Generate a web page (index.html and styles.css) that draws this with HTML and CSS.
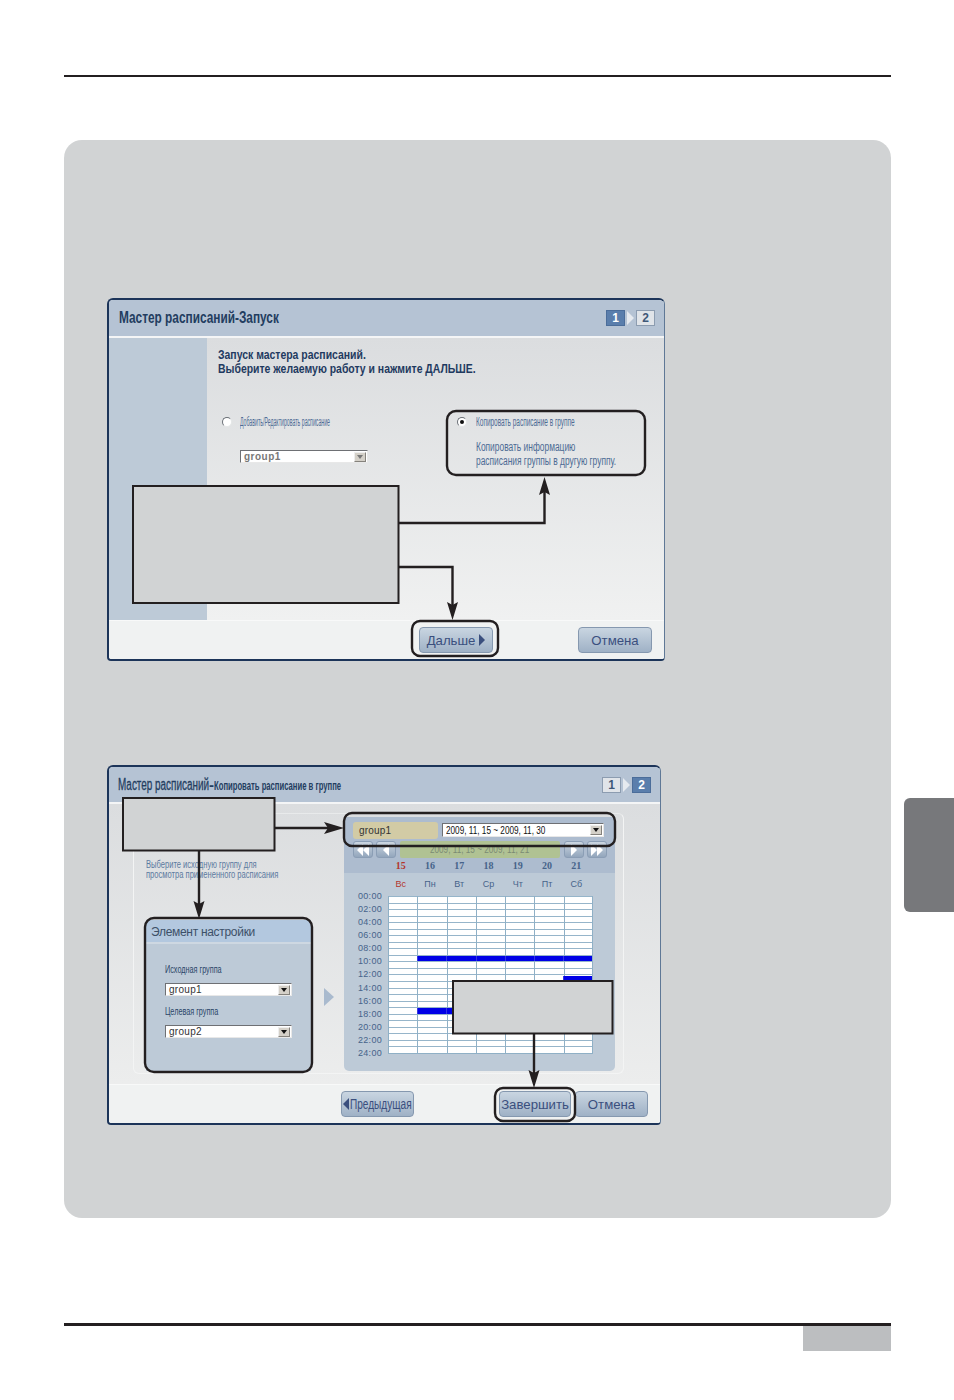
FILE: index.html
```html
<!DOCTYPE html>
<html lang="ru">
<head>
<meta charset="utf-8">
<title>Мастер расписаний</title>
<link rel="stylesheet" href="styles.css">
</head>
<body>
<div class="page">
  <div class="top-rule"></div>
  <main class="panel">
    <section class="win win-a">
      <header class="win-head">
        <h2 class="title">Мастер расписаний-Запуск</h2>
        <div class="steps">
          <span class="step on">1</span>
          <svg class="step-arrow" width="7" height="14" viewBox="0 0 7 14"><polygon points="0,0 7,7 0,14" fill="#e6eaef"/></svg>
          <span class="step">2</span>
        </div>
      </header>
      <div class="win-a-body">
        <aside class="side"></aside>
        <div class="start">
          <p class="intro">Запуск мастера расписаний.<br>Выберите желаемую работу и нажмите ДАЛЬШЕ.</p>
          <div class="choices">
            <div class="choice-l">
              <div class="radio-row"><span class="radio"></span><span class="tiny label-add">Добавить/Редактировать расписание</span></div>
              <div class="sel sel-grey"><span class="sel-text">group1</span><span class="sel-btn"></span></div>
            </div>
            <div class="choice-r">
              <div class="radio-row"><span class="radio checked"></span><span class="tiny label-copy">Копировать расписание в группе</span></div>
              <p class="tiny desc">Копировать информацию<br>расписания группы в другую группу.</p>
            </div>
          </div>
        </div>
      </div>
      <footer class="win-foot foot-a">
        <button class="btn btn-next">Дальше <svg width="6" height="12" viewBox="0 0 6 12"><polygon points="0,0 6,6 0,12" fill="#3a4f7e"/></svg></button>
        <button class="btn btn-cancel-a">Отмена</button>
      </footer>
    </section>

    <section class="win win-b">
      <header class="win-head head-b">
        <h2 class="title title-b"><span class="t-main">Мастер расписаний</span><span class="t-dash">-</span><span class="t-sub">Копировать расписание в группе</span></h2>
        <div class="steps">
          <span class="step">1</span>
          <svg class="step-arrow" width="7" height="14" viewBox="0 0 7 14"><polygon points="0,0 7,7 0,14" fill="#e6eaef"/></svg>
          <span class="step on">2</span>
        </div>
      </header>
      <div class="win-b-body">
        <div class="frame">
          <div class="left-col">
            <p class="tiny hint">Выберите исходную группу для<br>просмотра примененного расписания</p>
            <div class="setting">
              <h3 class="setting-head">Элемент настройки</h3>
              <div class="setting-body">
                <div class="tiny field-label">Исходная группа</div>
                <div class="sel sel-small"><span class="sel-text">group1</span><span class="sel-btn"></span></div>
                <div class="tiny field-label second">Целевая группа</div>
                <div class="sel sel-small"><span class="sel-text">group2</span><span class="sel-btn"></span></div>
              </div>
            </div>
          </div>
          <svg class="mid-arrow" width="10" height="18" viewBox="0 0 10 18"><polygon points="0,0 10,9 0,18" fill="#a9bace"/></svg>
          <div class="cal">
            <div class="cal-row">
              <span class="group-name">group1</span>
              <div class="sel sel-range"><span class="sel-text">2009, 11, 15 ~ 2009, 11, 30</span><span class="sel-btn"></span></div>
            </div>
            <div class="cal-nav">
              <span class="nav"><svg width="14" height="12" viewBox="0 0 14 12"><path d="M7 0 1 6l6 6zM13 0 7 6l6 6z" fill="#fff"/></svg></span>
              <span class="nav"><svg width="8" height="12" viewBox="0 0 8 12"><path d="M7 0 1 6l6 6z" fill="#fff"/></svg></span>
              <span class="week"><span class="week-text">2009, 11, 15 ~ 2009, 11, 21</span></span>
              <span class="nav"><svg width="8" height="12" viewBox="0 0 8 12"><path d="M1 0l6 6-6 6z" fill="#fff"/></svg></span>
              <span class="nav"><svg width="14" height="12" viewBox="0 0 14 12"><path d="M1 0l6 6-6 6zM7 0l6 6-6 6z" fill="#fff"/></svg></span>
            </div>
            <div class="days nums">
              <span class="sun">15</span><span>16</span><span>17</span><span>18</span><span>19</span><span>20</span><span>21</span>
            </div>
            <div class="days names">
              <span class="sun">Вс</span><span>Пн</span><span>Вт</span><span>Ср</span><span>Чт</span><span>Пт</span><span>Сб</span>
            </div>
            <div class="sched-wrap">
              <div class="times">
                <span>00:00</span><span>02:00</span><span>04:00</span><span>06:00</span><span>08:00</span><span>10:00</span><span>12:00</span><span>14:00</span><span>16:00</span><span>18:00</span><span>20:00</span><span>22:00</span><span>24:00</span>
              </div>
              <div class="sched">
                <i class="bar bar-am"></i>
                <i class="bar bar-sat"></i>
                <i class="bar bar-pm"></i>
              </div>
            </div>
          </div>
        </div>
      </div>
      <footer class="win-foot foot-b">
        <button class="btn btn-prev"><svg width="6" height="12" viewBox="0 0 6 12"><polygon points="6,0 0,6 6,12" fill="#3a4f7e"/></svg><span class="prev-text">Предыдущая</span></button>
        <button class="btn btn-finish">Завершить</button>
        <button class="btn btn-cancel-b">Отмена</button>
      </footer>
    </section>
  </main>
  <div class="bottom">
    <div class="bottom-rule"></div>
    <div class="page-tag"></div>
  </div>

  <div class="side-tab"></div>

  <svg class="overlay" width="954" height="1400" viewBox="0 0 954 1400">
    <g fill="none" stroke="#231f20" stroke-width="2.400">
      <rect x="447" y="411" width="198" height="64" rx="9"/>
      <rect x="412" y="621" width="86" height="35" rx="8"/>
      <rect x="344" y="813" width="271" height="33" rx="8"/>
      <rect x="145" y="918" width="167" height="154" rx="9"/>
      <rect x="495" y="1088" width="80" height="33" rx="8"/>
      <polyline points="399,523 544.500,523 544.500,490"/>
      <polyline points="399,567 452.500,567 452.500,606"/>
      <polyline points="275,828 330,828"/>
      <polyline points="199,851 199,906"/>
      <polyline points="534,1034 534,1074"/>
      <rect x="133" y="486" width="265.500" height="117" fill="#d1d3d4" stroke-width="2"/>
      <rect x="123" y="798" width="151.500" height="52.500" fill="#d1d3d4" stroke-width="2"/>
      <rect x="453" y="981" width="159.500" height="52.500" fill="#d1d3d4" stroke-width="2"/>
    </g>
    <g fill="#231f20">
      <polygon points="544.500,477 539,495 544.500,492 550,495"/>
      <polygon points="452.500,620 447,602 452.500,605 458,602"/>
      <polygon points="344,828 324,822 328,828 324,834"/>
      <polygon points="199,919 193.500,901 199,904 204.500,901"/>
      <polygon points="534,1088 528.500,1070 534,1073 539.500,1070"/>
    </g>
  </svg>
</div>
</body>
</html>
```
FILE: styles.css
```css
* { box-sizing: border-box; }
html, body { margin: 0; padding: 0; background: #fff; }
body { font-family: "Liberation Sans", Arial, sans-serif; color: #1f3a60; }
h2, h3, p { margin: 0; font-weight: normal; }
.page { position: relative; width: 954px; height: 1400px; overflow: hidden; padding: 75px 63px 0 64px; }
.top-rule { height: 2px; background: #231f20; }
.panel { margin-top: 63px; height: 1078px; background: #d1d3d4; border-radius: 18px; padding: 158px 0 0 43px; }

/* window shell */
.win { display: flex; flex-direction: column; border: 2px solid #1c3459; border-right-color: #5f7896; border-right-width: 1px; border-radius: 6px 6px 4px 4px; overflow: hidden; background: #e4e6e7; }
.win-a { width: 558px; height: 363px; }
.win-b { width: 554px; height: 360px; margin-top: 104px; }
.win-head { flex: none; height: 38px; display: flex; align-items: center; justify-content: space-between; padding: 0 9px 0 10px; background: #b5c3d4; border-bottom: 2px solid #f4f5f6; }
.head-b { height: 37px; padding-left: 9px; padding-right: 9px; }
.title { font-size: 16px; font-weight: bold; color: #233d60; white-space: nowrap; transform: scaleX(.74); transform-origin: left center; }
.title-b { font-size: 15px; font-weight: normal; transform: none; display: flex; align-items: baseline; }
.t-main { display: inline-block; width: 91px; font-size: 16px; transform: scaleX(.62); transform-origin: left center; -webkit-text-stroke: .3px #233d60; }
.t-dash { width: 5px; font-weight: bold; }
.t-sub { display: inline-block; width: 127px; font-size: 12px; font-weight: bold; transform: scaleX(.64); transform-origin: left center; }
.steps { display: flex; align-items: center; gap: 2px; }
.step { width: 19px; height: 16px; display: flex; align-items: center; justify-content: center; font-size: 12px; font-weight: bold; color: #3f5878; background: #e0e4e9; border: 1px solid #8c9cb0; }
.step.on { background: #5a7eac; border-color: #4b6d9a; color: #fff; }
.step-arrow { display: block; }

.tiny { font-size: 12px; white-space: nowrap; transform-origin: left center; color: #4d6b94; }

/* first window */
.win-a-body { flex: 1; display: flex; background: linear-gradient(#dbdddf, #f0f1f1); }
.side { flex: none; width: 98px; background: #bdcad7; }
.start { flex: 1; padding: 10px 0 0 11px; }
.intro { font-size: 12px; font-weight: bold; line-height: 14px; color: #1f3a60; white-space: nowrap; transform: scaleX(.87); transform-origin: left center; }
.choices { display: flex; margin-top: 39px; }
.choice-l { width: 239px; padding-left: 4px; }
.radio-row { display: flex; align-items: center; height: 14px; gap: 8px; }
.radio { width: 10px; height: 10px; flex: none; border-radius: 50%; background: #fff; border: 1px solid #6a6f76; border-right-color: #e4e6e7; border-bottom-color: #e4e6e7; position: relative; }
.radio.checked::after { content: ""; position: absolute; left: 2px; top: 2px; width: 4px; height: 4px; border-radius: 50%; background: #111; }
.label-add { display: inline-block; transform: scaleX(.433); width: 90px; }
.label-copy { display: inline-block; transform: scaleX(.54); width: 99px; margin-left: 1px; }
.desc { margin: 11px 0 0 19px; line-height: 14px; transform: scaleX(.7); }

.sel { display: flex; align-items: center; justify-content: space-between; background: #fff; border: 1px solid #6e7074; border-right-color: #e8e8e8; border-bottom-color: #e8e8e8; padding: 0 1px 0 3px; }
.sel-text { font-size: 10px; letter-spacing: .3px; color: #333; white-space: nowrap; }
.sel-btn { flex: none; width: 12px; height: 10px; background: #d4d0c8; border: 1px solid #85827c; border-left-color: #eee; border-top-color: #eee; position: relative; }
.sel-btn::after { content: ""; position: absolute; left: 2px; top: 2px; border: 3px solid transparent; border-top: 4px solid #111; border-bottom: 0; }
.sel-grey { width: 128px; height: 13px; margin: 21px 0 0 18px; }
.sel-grey .sel-text { font-weight: bold; color: #777; letter-spacing: .5px; }
.sel-grey .sel-btn::after { border-top-color: #777; }

.win-foot { flex: none; background: #f0f2f2; border-top: 1px solid #f8f9f9; position: relative; display: flex; align-items: center; }
.foot-a { height: 39px; padding-left: 310px; }
.foot-b { height: 39px; padding-left: 232px; }
.btn { height: 26px; font-family: "Liberation Sans", Arial, sans-serif; font-size: 13.200px; color: #3a4f7e; background: linear-gradient(#c9d5e1, #9fb1c6); border: 1px solid #8598af; border-radius: 4px; padding: 0; display: flex; align-items: center; justify-content: center; gap: 4px; white-space: nowrap; }
.btn-next { width: 74px; }
.btn-cancel-a { width: 74px; margin-left: 85px; }
.btn-prev { width: 73px; gap: 1px; justify-content: flex-start; padding-left: 1px; }
.prev-text { display: inline-block; width: 62px; font-size: 14px; transform: scaleX(.72); transform-origin: left center; }
.btn-finish { width: 72px; margin-left: 85px; }
.btn-cancel-b { width: 73px; margin-left: 4px; }

/* second window */
.win-b-body { flex: 1; padding: 9px 36px 10px 24px; background: linear-gradient(#dbdddf, #eceded); }
.frame { height: 261px; display: flex; align-items: stretch; border: 1px solid #f3f4f4; border-top-color: #e8eaeb; border-radius: 6px; padding: 3px 10px 2px 12px; }
.left-col { width: 165px; display: flex; flex-direction: column; flex: none; }
.hint { margin-top: 43px; font-size: 10px; line-height: 10px; transform: scaleX(.757); color: #5c7aa0; }
.setting { margin-top: auto; height: 151px; background: #bdcad7; display: flex; flex-direction: column; }
.setting-head { flex: none; height: 24px; padding: 3px 0 0 5px; background: #b3c8df; border-bottom: 2px solid #ced8e2; font-size: 12px; letter-spacing: -.3px; line-height: 18px; color: #3d5068; white-space: nowrap; }
.setting-body { padding: 19px 0 0 19px; }
.field-label { display: block; font-size: 11px; line-height: 13px; color: #2b4568; transform: scaleX(.66); }
.field-label.second { margin-top: 9px; }
.sel-small { width: 127px; height: 13px; margin-top: 7px; }
.mid-arrow { flex: none; align-self: center; margin: 105px 10px 0 13px; }

.cal { flex: 1; background: #bdcad7; border-radius: 0 0 5px 5px; display: flex; flex-direction: column; font-size: 9px; color: #46638a; }
.cal-row { flex: none; height: 22px; padding: 5px 9px 0; display: flex; gap: 4px; background: #adbccf; }
.group-name { width: 85px; height: 17px; background: #d2cba5; border-radius: 3px; font-size: 10px; letter-spacing: .2px; color: #333; line-height: 17px; padding-left: 6px; }
.sel-range { width: 162px; height: 14px; margin-top: 1px; }
.sel-range .sel-text { color: #111; letter-spacing: 0; display: inline-block; transform: scaleX(.82); transform-origin: left center; }
.cal-nav { flex: none; height: 19px; padding: 2px 8px 0 9px; display: flex; gap: 3px; background: #adbccf; }
.nav { width: 20px; height: 17px; display: flex; align-items: center; justify-content: center; background: linear-gradient(#cbd6e1, #93a6bc); border: 1px solid #8b9eb5; border-radius: 3px; }
.week { width: 160px; height: 17px; margin: 0 1px; background: #b0c293; border-radius: 2px; display: flex; justify-content: center; font-size: 10px; line-height: 17px; color: #7b8a74; white-space: nowrap; }
.week-text { display: inline-block; transform: scaleX(.82); }
.days { flex: none; display: grid; grid-template-columns: repeat(7, 29.290px); padding-left: 42px; text-align: center; }
.days .sun { color: #b3352c; }
.nums { height: 15px; background: #adbccf; font-family: "Liberation Serif", serif; font-weight: bold; font-size: 10px; line-height: 15px; }
.names { height: 17px; font-size: 9px; line-height: 22px; }
.sched-wrap { flex: none; display: flex; padding-top: 6px; }
.times { flex: none; width: 44px; height: 165px; margin-top: -4px; display: flex; flex-direction: column; justify-content: space-between; padding-right: 6px; text-align: right; font-size: 9px; line-height: 8px; letter-spacing: .3px; color: #46638a; }
.sched { width: 205px; height: 158px; display: grid; grid-template-columns: repeat(7, 1fr); grid-template-rows: repeat(24, 1fr); background-color: #fff; border-right: 1px solid #8fb0c6; border-bottom: 1px solid #8fb0c6; background-image: repeating-linear-gradient(to right, #8fb0c6 0 1px, transparent 1px 29.290px), repeating-linear-gradient(to bottom, #96b5ca 0 1px, transparent 1px 6.540px); }
.bar { display: block; background: repeating-linear-gradient(to right, #3535e0 0 1px, #0000e6 1px 29.290px); margin-top: 1px; }
.bar-am { grid-column: 2 / 8; grid-row: 10; }
.bar-sat { grid-column: 7 / 8; grid-row: 13; }
.bar-pm { grid-column: 2 / 4; grid-row: 18; }

.bottom { position: relative; margin-top: 105px; }
.bottom-rule { height: 3px; background: #231f20; }
.page-tag { width: 88px; height: 25px; margin-left: auto; background: #bcbec0; }
.side-tab { position: absolute; left: 904px; top: 798px; width: 50px; height: 114px; background: #77787b; border-radius: 6px 0 0 6px; }
.overlay { position: absolute; left: 0; top: 0; pointer-events: none; }
```
